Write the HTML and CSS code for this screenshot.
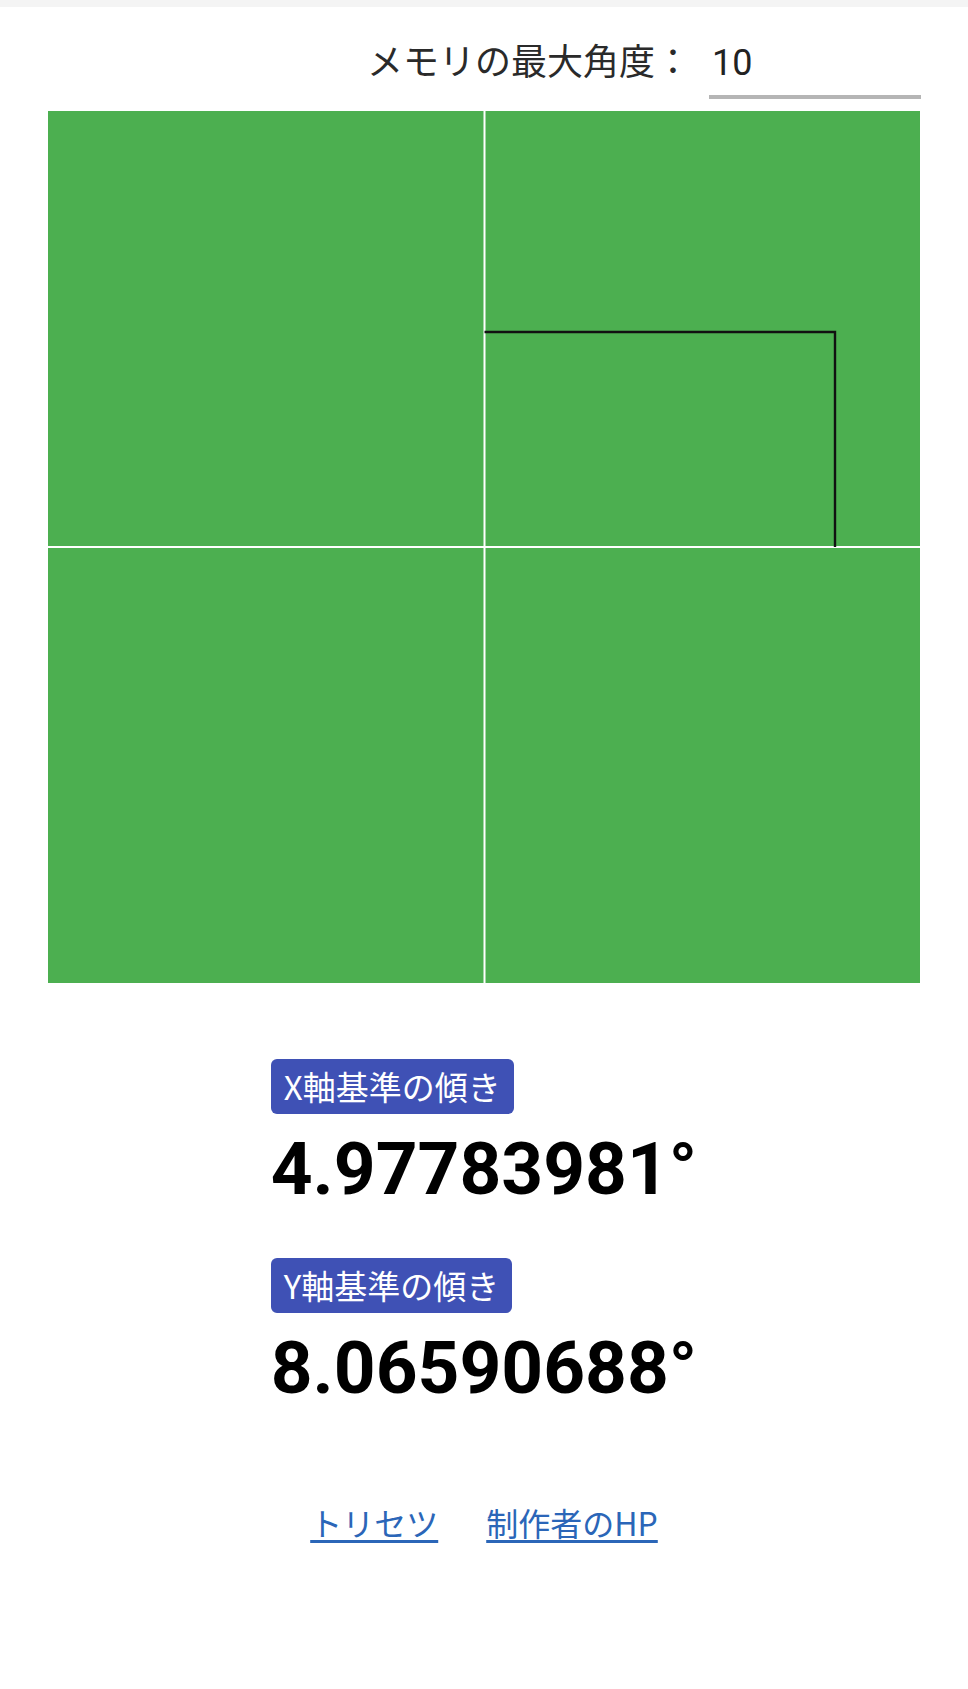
FILE: index.html
```html
<!DOCTYPE html>
<html lang="ja">
<head>
<meta charset="utf-8">
<title>傾き</title>
<link rel="stylesheet" href="styles.css">
</head>
<body>
<div class="topbar"></div>
<div class="memory">
  <label class="memory-label" for="maxdeg">メモリの最大角度：</label>
  <input class="memory-input" id="maxdeg" type="text" value="10">
</div>
<div class="board">
  <svg class="board-svg" viewBox="0 0 872 872" width="872" height="872">
    <rect x="0" y="0" width="872" height="872" fill="#4caf50"/>
    <line x1="436.5" y1="0" x2="436.5" y2="872" stroke="#ffffff" stroke-width="2"/>
    <line x1="0" y1="436" x2="872" y2="436" stroke="#ffffff" stroke-width="2"/>
    <polyline points="436.5,221 787,221 787,436" fill="none" stroke="#111111" stroke-width="2.4"/>
  </svg>
</div>
<div class="readouts">
  <div class="readout">
    <span class="badge">X軸基準の傾き</span>
    <div class="value">4.97783981°</div>
  </div>
  <div class="readout second">
    <span class="badge">Y軸基準の傾き</span>
    <div class="value">8.06590688°</div>
  </div>
</div>
<div class="links">
  <a class="link" href="#">トリセツ</a>
  <a class="link" href="#">制作者のHP</a>
</div>
</body>
</html>
```
FILE: styles.css
```css
html, body {
  margin: 0;
  padding: 0;
  background: #ffffff;
}
body {
  font-family: "Noto Sans CJK JP", Roboto, sans-serif;
  color: #222222;
  width: 968px;
}
.topbar {
  height: 7px;
  background: #f4f4f4;
}
.memory {
  display: flex;
  justify-content: flex-end;
  align-items: baseline;
  padding: 30px 47px 0 0;
}
.memory-label {
  font-size: 36px;
  line-height: 44px;
  color: #2a2a2a;
  margin-right: 18px;
}
.memory-input {
  width: 212px;
  box-sizing: border-box;
  font-family: Roboto, "Noto Sans CJK JP", sans-serif;
  font-size: 36px;
  line-height: 44px;
  height: 58px;
  padding: 0 0 10px 3px;
  border: none;
  border-bottom: 4px solid #b5b5b5;
  color: #222222;
  background: transparent;
  outline: none;
}
.board {
  width: 872px;
  height: 872px;
  margin: 12px auto 0;
}
.board-svg {
  display: block;
}
.readouts {
  width: fit-content;
  margin: 76px auto 0;
  display: flex;
  flex-direction: column;
}
.readout {
  display: flex;
  flex-direction: column;
  align-items: flex-start;
}
.readout.second {
  margin-top: 45px;
}
.badge {
  display: inline-block;
  background: #3f51b5;
  color: #ffffff;
  font-size: 33px;
  line-height: 55px;
  height: 55px;
  padding: 0 13px;
  border-radius: 6px;
}
.value {
  font-family: Roboto, sans-serif;
  font-weight: 700;
  font-size: 73px;
  line-height: 88px;
  color: #000000;
  margin-top: 11px;
}
.links {
  display: flex;
  justify-content: center;
  gap: 48px;
  margin-top: 87px;
}
.link {
  font-size: 32px;
  line-height: 46px;
  color: #2b66b8;
  text-decoration: underline;
  text-underline-offset: 4px;
}
```
